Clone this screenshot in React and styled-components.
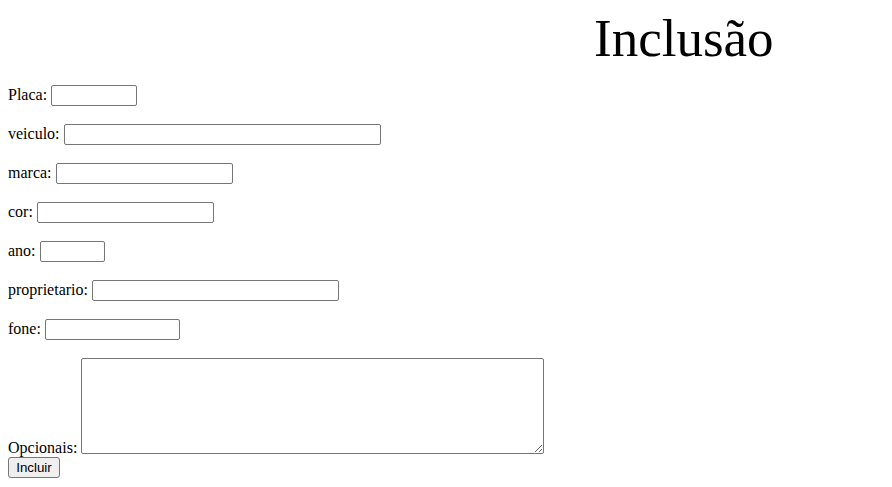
import styled, { createGlobalStyle } from 'styled-components';

const GlobalStyle = createGlobalStyle`
  body {
    margin: 8px;
    background: #fff;
    color: #000;
    font-family: 'Liberation Serif', 'Times New Roman', serif;
    font-size: 16px;
  }
`

const fields = [
  { label: 'Placa', name: 'placa', width: 86 },
  { label: 'veiculo', name: 'veiculo', width: 317 },
  { label: 'marca', name: 'marca', width: 177 },
  { label: 'cor', name: 'cor', width: 177 },
  { label: 'ano', name: 'ano', width: 65 },
  { label: 'proprietario', name: 'proprietario', width: 247 },
  { label: 'fone', name: 'fone', width: 135 },
];

const App = () => {
  return (
    <>
      <GlobalStyle />
      <Title>Inclusão</Title>
      <Form onSubmit={(e) => e.preventDefault()}>
        {fields.map((f) => (
          <Row key={f.name}>
            <label htmlFor={f.name}>{f.label}: </label>
            <Input id={f.name} name={f.name} type="text" $width={f.width} />
          </Row>
        ))}
        <LastRow>
          <label htmlFor="opcionais">Opcionais: </label>
          <TextArea id="opcionais" name="opcionais" />
        </LastRow>
        <Button type="submit">Incluir</Button>
      </Form>
    </>
  );
};

const Title = styled.h1`
  margin: 0;
  padding-left: 586px;
  font-family: 'Liberation Serif', 'Times New Roman', serif;
  font-size: 53px;
  font-weight: normal;
  line-height: 60px;
`

const Form = styled.form`
  margin: 0;
`

const Row = styled.p`
  margin: 16px 0;
  line-height: normal;
`

const LastRow = styled.div`
  margin-top: 17px;
`

const Input = styled.input`
  box-sizing: border-box;
  width: ${(props) => props.$width}px;
  height: 21px;
  margin: 1px 0;
  padding: 1px 2px;
  border: 1px solid #767676;
  border-radius: 2px;
  font-family: Arial, 'Liberation Sans', sans-serif;
  font-size: 13.33px;
  vertical-align: baseline;
  background: #fff;
`

const TextArea = styled.textarea`
  box-sizing: border-box;
  width: 463px;
  height: 96px;
  margin: 0 0 -1px;
  padding: 2px;
  border: 1px solid #767676;
  border-radius: 2px;
  font-family: 'Liberation Mono', monospace;
  font-size: 13.33px;
  vertical-align: baseline;
  resize: both;
`

const Button = styled.button`
  display: block;
  box-sizing: border-box;
  width: 52px;
  height: 21px;
  padding: 1px 6px;
  border: 1px solid #767676;
  border-radius: 3px;
  background-color: #efefef;
  color: #000;
  font-family: Arial, 'Liberation Sans', sans-serif;
  font-size: 13.33px;
`

export default App;
